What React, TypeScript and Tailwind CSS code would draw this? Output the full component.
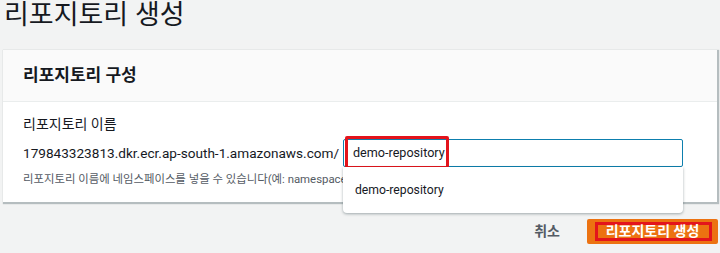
import React from "react";

const font = { fontFamily: 'Roboto, "Noto Sans CJK KR", sans-serif' };

const App = () => {
  return (
    <div
      className="w-[720px] h-[253px] overflow-hidden bg-[#f2f3f3] text-[#16191f]"
      style={font}
    >
      {/* 페이지 제목 */}
      <h1 className="pl-[4px] h-[50px] text-[27px] leading-[31px] font-normal text-[#16191f]">
        리포지토리 생성
      </h1>

      {/* 카드 */}
      <div className="ml-[3px] w-[714px] h-[152px] bg-white shadow-[1px_1px_1px_1px_rgba(0,28,36,0.25)]">
        <div className="h-[52px] bg-[#fafafa] border-b border-[#eaeded] flex items-center px-[20px]">
          <h2 className="text-[17px] font-bold text-[#16191f]">리포지토리 구성</h2>
        </div>
        <div className="px-[20px] pt-[12px]">
          <div className="text-[14px] leading-[20px] text-[#16191f]">리포지토리 이름</div>
          <div className="flex items-center mt-[5px]">
            <span className="text-[13.6px] leading-[22px] w-[320px] whitespace-nowrap">
              179843323813.dkr.ecr.ap-south-1.amazonaws.com/
            </span>
            <div className="relative">
              <div className="w-[340px] h-[28px] border border-[#0d7fae] rounded-[2px] flex items-center pl-[9px] text-[12.6px] text-[#16191f] bg-white">
                demo-repository
              </div>
              {/* 강조 표시 */}
              <div className="absolute left-[2px] top-[-3px] w-[104px] h-[33px] border-[3px] border-[#e3141c] rounded-[2px]" />
              {/* 자동완성 목록 */}
              <div className="absolute left-0 top-[28px] w-[340px] h-[46px] bg-white rounded-b-[4px] shadow-[0_1px_3px_rgba(0,28,36,0.35)] flex items-center pl-[12px] text-[12.2px] text-[#16191f] z-10">
                demo-repository
              </div>
            </div>
          </div>
          <div className="mt-[3px] text-[11.4px] leading-[18px] text-[#545b64] whitespace-nowrap">
            리포지토리 이름에 네임스페이스를 넣을 수 있습니다(예: namespace/repo-name).
          </div>
        </div>
      </div>

      {/* 버튼 */}
      <div className="flex justify-end items-center mt-[17px] pr-[2px]">
        <button className="text-[14px] font-bold text-[#545b64] mr-[27px]">취소</button>
        <button className="relative w-[131px] h-[25px] bg-[#ec7211] rounded-[2px] text-white text-[14px] font-bold flex items-center justify-center">
          <span className="absolute left-[8px] top-[3px] w-[117px] h-[19px] border-[3px] border-[#e3141c]" />
          <span className="relative">리포지토리 생성</span>
        </button>
      </div>
    </div>
  );
};

export default App;
